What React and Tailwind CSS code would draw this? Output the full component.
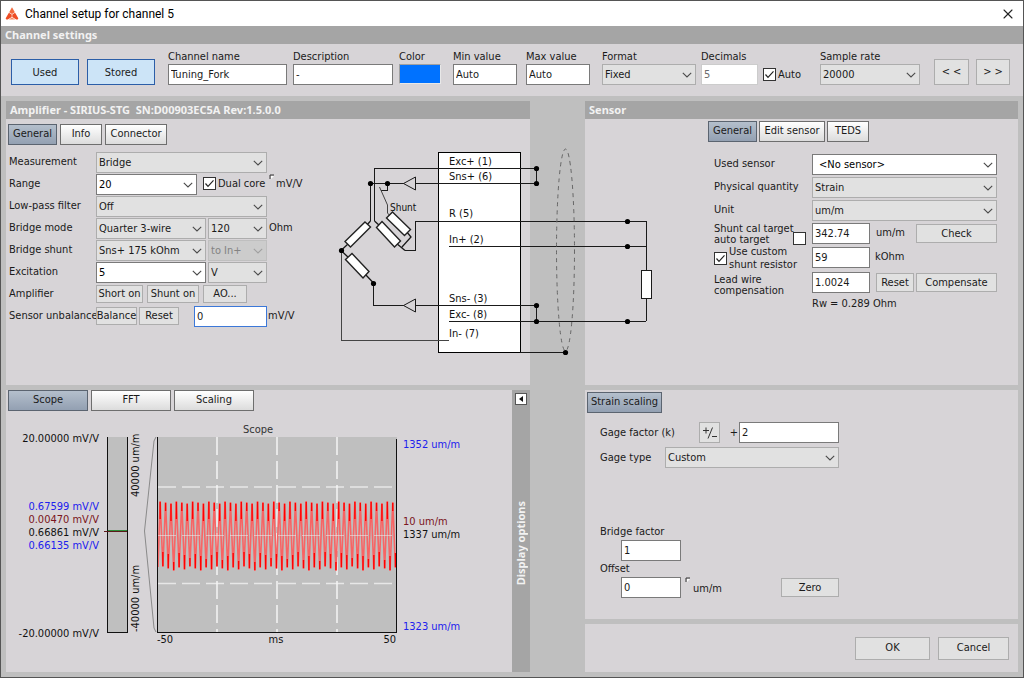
import { useState } from 'react'
import clsx from 'clsx'
import { X } from 'lucide-react'

/**
 * Channel setup dialog.
 *
 *   title bar
 *   channel settings strip
 *   ┌ amplifier + bridge wiring ┐   ┌ sensor ─────────┐
 *   ├ scope ────────────────────┤   ├ strain scaling ─┤
 *   └───────────────────────────┘   └ OK / Cancel ────┘
 */

const CYCLES = 44
const WAVE_LEFT = 158
const WAVE_RIGHT = 396

function Chevron({ faded }) {
  return (
    <svg
      width="10"
      height="6"
      viewBox="0 0 10 6"
      className="pointer-events-none absolute top-2 right-1"
      fill="none"
      stroke={faded ? '#a0a0a0' : '#4a4a4a'}
      strokeWidth="1.1"
    >
      <path d="M0.8 0.8 L5 5 L9.2 0.8" />
    </svg>
  )
}

function Select({ value, options = [], editable, indented, disabled, className, ...rest }) {
  return (
    <span className={clsx('relative block h-[21px] shrink-0', className)}>
      <select
        defaultValue={value}
        disabled={disabled}
        className={clsx(
          'block h-full w-full appearance-none border pr-4 outline-none',
          indented ? 'pl-[6px]' : 'pl-[2px]',
          editable && 'border-[#7a7a7a] bg-white text-black',
          !editable && !disabled && 'border-[#adadad] bg-[#e1e1e1]',
          disabled && 'border-[#bfbfbf] bg-[#cccccc] text-[#838383]',
        )}
        {...rest}
      >
        {[value, ...options].map(o => <option key={o}>{o}</option>)}
      </select>
      <Chevron faded={disabled} />
    </span>
  )
}

function TextBox({ className, focused, ...rest }) {
  return (
    <input
      type="text"
      className={clsx(
        'block h-[21px] min-w-0 shrink-0 border bg-white px-[2px] outline-none',
        focused ? 'border-[#3c78d8]' : 'border-[#7a7a7a]',
        className,
      )}
      {...rest}
    />
  )
}

function Button({ className, children, ...rest }) {
  return (
    <button
      type="button"
      className={clsx(
        'flex shrink-0 items-center justify-center border border-[#adadad] bg-[#e1e1e1] whitespace-nowrap',
        className,
      )}
      {...rest}
    >
      {children}
    </button>
  )
}

function CheckBox({ className, ...rest }) {
  return (
    <span className={clsx('relative block size-[13px] shrink-0', className)}>
      <input
        type="checkbox"
        className="peer block size-full appearance-none border border-[#333] bg-white"
        {...rest}
      />
      <svg
        viewBox="0 0 13 13"
        className="pointer-events-none absolute inset-0 hidden size-full peer-checked:block"
        fill="none"
        stroke="#222"
        strokeWidth="1.2"
      >
        <path d="M2.5 6.5 L5 9.3 L10.5 3.3" />
      </svg>
    </span>
  )
}

function Tab({ active, className, children, ...rest }) {
  return (
    <button
      type="button"
      className={clsx(
        'h-[21px] shrink-0 border bg-linear-to-b pb-[2px] text-center whitespace-nowrap',
        active
          ? 'border-[#5b6470] from-[#b4bfcc] to-[#93a0b2]'
          : 'border-[#6e6e6e] from-white to-[#dcdcdc]',
        className,
      )}
      {...rest}
    >
      {children}
    </button>
  )
}

function PanelHeader({ children }) {
  return (
    <h2 className="h-[18px] bg-[#a5a5a5] px-1 font-['Noto_Sans',sans-serif] leading-[18px] font-bold whitespace-pre text-[#f2f2f2]">
      {children}
    </h2>
  )
}

function UnitMark() {
  return (
    <svg width="6" height="6" viewBox="0 0 6 6" className="shrink-0">
      <path d="M1 5 V1 H5" fill="none" stroke="#333" />
      <path d="M2 2 H5 L2 5 Z" fill="#fff" />
    </svg>
  )
}

function Logo() {
  return (
    <svg width="14" height="13" viewBox="0 0 14 13">
      <path d="M7 0.3 L9.8 5.2 L7 7 L4.2 5.2 Z" fill="#f26a3d" />
      <path d="M3.9 5.7 L6.7 7.5 V10 L2.8 12.4 H1.4 Q0.2 12.2 1 10.8 Z" fill="#ee4d24" />
      <path d="M10.1 5.7 L7.3 7.5 V10 L11.2 12.4 H12.6 Q13.8 12.2 13 10.8 Z" fill="#ee4d24" />
      <path d="M7 10.4 L10.2 12.6 H3.8 Z" fill="#f58a63" />
    </svg>
  )
}

/* ── Top strip ──────────────────────────────────────────────────────────── */

function Field({ id, label, className, children }) {
  return (
    <div className={className}>
      <label htmlFor={id} className="block leading-[15px] whitespace-nowrap">{label}</label>
      {children}
    </div>
  )
}

function ChannelSettings() {
  const toggle = 'flex h-[26px] w-17 shrink-0 items-center justify-center border border-[#2b5ea8] bg-[#cce4f7] pt-[2px]'
  return (
    <section className="flex h-[52px] items-end bg-[#d7d4d7] px-[10px] pb-[11px]">
      <button type="button" className={toggle}>Used</button>
      <button type="button" className={clsx(toggle, 'ml-2')}>Stored</button>

      <Field id="name" label="Channel name" className="ml-[13px] w-[119px]">
        <TextBox id="name" defaultValue="Tuning_Fork" className="w-full" />
      </Field>
      <Field id="desc" label="Description" className="ml-[6px] w-[100px]">
        <TextBox id="desc" defaultValue="-" className="w-full" />
      </Field>
      <Field id="color" label="Color" className="ml-[6px] w-[42px]">
        <button
          id="color"
          type="button"
          aria-label="Color"
          className="mb-[1px] block h-5 w-full border border-[#e8e8e8] border-t-[#a0a0a0] border-l-[#a0a0a0] bg-[#0072ff]"
        />
      </Field>
      <Field id="min" label="Min value" className="ml-3 w-16">
        <TextBox id="min" defaultValue="Auto" className="w-full" />
      </Field>
      <Field id="max" label="Max value" className="ml-[9px] w-16">
        <TextBox id="max" defaultValue="Auto" className="w-full" />
      </Field>
      <Field id="format" label="Format" className="ml-3 w-[94px]">
        <Select id="format" value="Fixed" options={['Scientific']} />
      </Field>
      <Field id="decimals" label="Decimals" className="ml-[5px] w-[57px]">
        <input
          id="decimals"
          defaultValue="5"
          disabled
          className="block h-[21px] w-full border border-[#ccc] bg-white px-[2px] text-[#6d6d6d]"
        />
      </Field>
      <div className="ml-[5px] flex h-[21px] w-[57px] items-center gap-[2px]">
        <CheckBox id="autoDec" defaultChecked />
        <label htmlFor="autoDec">Auto</label>
      </div>
      <Field id="rate" label="Sample rate" className="w-[100px]">
        <Select id="rate" value="20000" options={['10000', '5000']} />
      </Field>
      <Button className="ml-[14px] h-[26px] w-[35px]">&lt; &lt;</Button>
      <Button className="ml-[7px] h-[26px] w-[34px]">&gt; &gt;</Button>
    </section>
  )
}

/* ── Amplifier ──────────────────────────────────────────────────────────── */

function Row({ label, id, children }) {
  return (
    <div className="flex h-[22px] items-start">
      <label htmlFor={id} className="w-[87px] shrink-0 leading-5 whitespace-nowrap">{label}</label>
      {children}
    </div>
  )
}

function Resistor({ points }) {
  return <polygon points={points} fill="#fff" stroke="#222" strokeWidth="1.4" />
}

const NODES = [
  [370, 183], [387, 183], [341, 250], [373, 283],
  [536, 168], [536, 183], [536, 305], [536, 321],
  [627, 221], [627, 246], [627, 321], [565, 352],
]

const PINS = [
  ['Exc+ (1)', 165], ['Sns+ (6)', 180], ['R (5)', 217], ['In+ (2)', 243],
  ['Sns- (3)', 302], ['Exc- (8)', 318], ['In- (7)', 337],
]

// Wiring runs from the bridge through the connector and the cable to the sensor,
// so it spills over the neighbouring panel.
function BridgeDiagram() {
  return (
    <svg
      width="325"
      height="215"
      viewBox="335 145 325 215"
      className="pointer-events-none absolute top-[44px] left-[329px] z-10"
      fill="none"
      stroke="#1a1a1a"
    >
      <rect x="438.5" y="152.5" width="82" height="200" fill="#fff" stroke="#000" />
      <g shapeRendering="crispEdges">
        <path d="M536 168.5 H374.5 V221 M536.5 168 V183" />
        <path d="M536 183.5 H370.5 V221" />
        <path d="M646 221.5 H415.5 V250.5 H405" />
        <path d="M449 246.5 H646" />
        <path d="M536 305.5 H373.5 V283 M536.5 305 V321" />
        <path d="M449 321.5 H646 M646.5 221 V321" />
        <path d="M449 340.5 H341.5 V250" stroke="#444" />
        <path d="M520 352.5 H565" />
        <path d="M387.5 183 V190.5 H381" />
      </g>
      <path d="M415.5 177 V190 L403.5 183.5 Z" fill="#d7d4d7" />
      <path d="M415.5 299 V312 L403.5 305.5 Z" fill="#d7d4d7" />

      <g strokeWidth="1.3">
        <path d="M370.5 221 L366 226 M348 244 L341 250.5 L349 258 M365 274 L373.5 283" />
        <path d="M374.5 221 L380 226 M396 243 L405 250.5 M406 231 L411 237 L402 247" />
      </g>
      <path d="M379.5 187 L387.5 205 V213 L391 217" stroke="#444" />
      <Resistor points="365,222 370.5,227 350.5,247 345,241.5" />
      <Resistor points="352,253.5 369,271.5 363,278 345.5,259.5" />
      <Resistor points="382,221.5 400.5,241 394.5,247 376.5,227.5" />
      <Resistor points="392.5,212 410.5,229.5 404.5,235.5 386.5,218" />
      <rect x="641.5" y="270.5" width="10" height="28" fill="#fff" />
      <ellipse cx="565.5" cy="250" rx="9" ry="101" stroke="#666" strokeDasharray="4 4" />

      {NODES.map(([x, y]) => (
        <circle key={`${x}-${y}`} cx={x + 0.5} cy={y + 0.5} r="2.6" fill="#000" stroke="none" />
      ))}
      <g fill="#111" stroke="none">
        {PINS.map(([name, y]) => <text key={name} x="449" y={y}>{name}</text>)}
        <text x="390" y="211" fontSize="10">Shunt</text>
      </g>
    </svg>
  )
}

function AmplifierPanel() {
  const [tab, setTab] = useState('General')
  const tabs = [['General', 'w-[49px]'], ['Info', 'w-[42px]'], ['Connector', 'w-[62px]']]

  return (
    <section className="relative bg-[#d7d4d7]">
      <PanelHeader>{'Amplifier - SIRIUS-STG  SN:D00903EC5A Rev:1.5.0.0'}</PanelHeader>
      <div className="flex gap-[3px] px-[2px] pt-[5px]">
        {tabs.map(([name, width]) => (
          <Tab key={name} active={tab === name} className={width} onClick={() => setTab(name)}>
            {name}
          </Tab>
        ))}
      </div>

      <div className="px-[3px] pt-[7px]">
        <Row label="Measurement" id="measurement">
          <Select id="measurement" value="Bridge" className="w-[171px]" />
        </Row>
        <Row label="Range" id="range">
          <Select id="range" value="20" options={['10', '2']} editable className="w-[101px]" />
          <CheckBox id="dual" defaultChecked className="mt-[3px] ml-[6px]" />
          <label htmlFor="dual" className="ml-[2px] w-[51px] leading-5 whitespace-nowrap">Dual core</label>
          <UnitMark />
          <span className="ml-[1px] leading-5">mV/V</span>
        </Row>
        <Row label="Low-pass filter" id="lowpass">
          <Select id="lowpass" value="Off" className="w-[171px]" />
        </Row>
        <Row label="Bridge mode" id="mode">
          <Select id="mode" value="Quarter 3-wire" className="w-[110px]" />
          <Select value="120" options={['350']} aria-label="Bridge resistance" className="ml-[2px] w-[59px]" />
          <span className="ml-[2px] leading-5">Ohm</span>
        </Row>
        <Row label="Bridge shunt" id="shunt">
          <Select id="shunt" value="Sns+ 175 kOhm" className="w-[110px]" />
          <Select value="to In+" disabled aria-label="Shunt target" className="ml-[2px] w-[59px]" />
        </Row>
        <Row label="Excitation" id="excitation">
          <Select id="excitation" value="5" options={['10']} editable className="w-[110px]" />
          <Select value="V" options={['mA']} aria-label="Excitation unit" className="ml-[2px] w-[59px]" />
        </Row>
        <Row label="Amplifier">
          <Button className="mt-[1px] h-[18px] w-[47px]">Short on</Button>
          <Button className="mt-[1px] ml-1 h-[18px] w-[52px]">Shunt on</Button>
          <Button className="mt-[1px] ml-1 h-[18px] w-11">AO...</Button>
        </Row>
        <Row label="Sensor unbalance" id="unbalance">
          <Button className="mt-[1px] h-[18px] w-[41px]">Balance</Button>
          <Button className="mt-[1px] ml-[2px] h-[18px] w-10">Reset</Button>
          <TextBox id="unbalance" defaultValue="0" focused className="ml-[15px] w-[73px]" />
          <span className="ml-[1px] leading-5">mV/V</span>
        </Row>
      </div>

      <BridgeDiagram />
    </section>
  )
}

/* ── Sensor ─────────────────────────────────────────────────────────────── */

function SensorPanel() {
  const [tab, setTab] = useState('General')
  const tabs = [['General', 'w-[49px]'], ['Edit sensor', 'w-[66px]'], ['TEDS', 'w-[42px]']]

  return (
    <section className="bg-[#d7d4d7]">
      <PanelHeader>Sensor</PanelHeader>
      <div className="flex gap-[2px] pt-[2px] pl-[123px]">
        {tabs.map(([name, width]) => (
          <Tab key={name} active={tab === name} className={width} onClick={() => setTab(name)}>
            {name}
          </Tab>
        ))}
      </div>

      <div className="grid grid-cols-[98px_1fr] gap-y-[2px] pt-3 pr-[21px] pl-[129px]">
        <label htmlFor="used" className="leading-5">Used sensor</label>
        <Select id="used" value="<No sensor>" editable indented />

        <label htmlFor="quantity" className="leading-5 whitespace-nowrap">Physical quantity</label>
        <Select id="quantity" value="Strain" />

        <label htmlFor="unit" className="leading-5">Unit</label>
        <Select id="unit" value="um/m" />

        <div className="relative h-[22px] leading-[11px]">
          <label htmlFor="target" className="block whitespace-nowrap">Shunt cal target</label>
          <label htmlFor="autoTarget" className="block">auto target</label>
          <CheckBox id="autoTarget" className="absolute! right-[6px] bottom-0" />
        </div>
        <div className="flex items-start">
          <TextBox id="target" defaultValue="342.74" className="w-[58px]" />
          <span className="ml-[6px] flex-1 leading-5">um/m</span>
          <Button className="mt-[1px] h-[19px] w-[81px]">Check</Button>
        </div>

        <div className="flex h-[22px] items-center gap-[2px] leading-[13px]">
          <CheckBox id="custom" defaultChecked />
          <label htmlFor="custom" className="whitespace-nowrap">Use custom<br />shunt resistor</label>
        </div>
        <div className="flex items-start">
          <TextBox aria-label="Shunt resistor" defaultValue="59" className="w-[58px]" />
          <span className="ml-[5px] leading-5">kOhm</span>
        </div>

        <label htmlFor="lead" className="pt-[3px] leading-[11px]">Lead wire<br />compensation</label>
        <div className="flex items-start pt-[1px]">
          <TextBox id="lead" defaultValue="1.0024" className="w-[58px]" />
          <Button className="mt-[1px] ml-auto h-[19px] w-[38px]">Reset</Button>
          <Button className="mt-[1px] ml-[2px] h-[19px] w-[81px]">Compensate</Button>
        </div>
        <p className="col-start-2 leading-3">Rw = 0.289 Ohm</p>
      </div>
    </section>
  )
}

/* ── Scope ──────────────────────────────────────────────────────────────── */

const PERIOD = (WAVE_RIGHT - WAVE_LEFT) / CYCLES

const wave = Array.from({ length: CYCLES }, (_, i) => {
  const x = WAVE_LEFT + i * PERIOD
  return {
    peak: x + PERIOD * 0.4,
    dip: x + PERIOD * 0.9,
    top: 501 + (i % 3),
    bottom: 567 + ((i * 2) % 5),
  }
})

const waveLine = `M${WAVE_LEFT} 567 ` + wave.map(w => `L${w.peak} ${w.top} L${w.dip} ${w.bottom}`).join(' ')
const waveCaps = wave
  .map((w, i) => `M${w.peak} ${w.top + 1} v${i % 3 === 1 ? 8 : 17} M${w.dip} ${w.bottom - 1} v-${i % 3 === 2 ? 8 : 14}`)
  .join(' ')

function ScopeChart() {
  return (
    <svg width="500" height="250" viewBox="6 411 500 250" className="block" fill="#111">
      <text x="258" y="433" textAnchor="middle" fill="#333">Scope</text>

      {/* Range bar */}
      <rect x="107" y="437" width="20" height="195" fill="#bfbfbf" />
      <path d="M107.5 437 V632.5 H127.5 V437" fill="none" stroke="#111" shapeRendering="crispEdges" />
      <path d="M108 530.5 H127" stroke="#2e8b3a" shapeRendering="crispEdges" />
      <path d="M104 531.5 H127" stroke="#5a1a1a" shapeRendering="crispEdges" />
      <path d="M156 437 L154 441 L144.5 531 L154 628 L156 632" fill="none" stroke="#8a8a8a" />
      <g textAnchor="end">
        <text x="99" y="442">20.00000 mV/V</text>
        <text x="99" y="510" fill="#2020ee">0.67599 mV/V</text>
        <text x="99" y="523" fill="#7a1420">0.00470 mV/V</text>
        <text x="99" y="536">0.66861 mV/V</text>
        <text x="99" y="549" fill="#2020ee">0.66135 mV/V</text>
        <text x="99" y="637">-20.00000 mV/V</text>
      </g>
      <text transform="translate(139 497) rotate(-90)">40000 um/m</text>
      <text transform="translate(139 632) rotate(-90)">-40000 um/m</text>

      {/* Plot */}
      <rect x="157" y="437" width="240" height="195" fill="#bfbfbf" />
      <g stroke="#f4f4f4" strokeOpacity="0.75" strokeDasharray="18 6">
        <path d="M158 487 H397 M158 583.5 H397" strokeWidth="1.4" />
        <path d="M217 437 V632 M277 437 V632 M337 437 V632" strokeWidth="2" />
      </g>
      <path d={waveLine} fill="none" stroke="#f86464" strokeWidth="1.6" />
      <path d={waveCaps} stroke="#ff0000" strokeWidth="1.4" />
      <path d="M158 535.5 H397" stroke="#f4f4f4" strokeOpacity="0.5" strokeDasharray="18 6" />
      <path d="M157.5 437 V632.5 H396.5 V439" fill="none" stroke="#111" shapeRendering="crispEdges" />
      <text x="157" y="643">-50</text>
      <text x="276" y="643" textAnchor="middle">ms</text>
      <text x="396" y="643" textAnchor="end">50</text>

      <text x="403" y="448" fill="#2020ee">1352 um/m</text>
      <text x="403" y="525" fill="#7a1420">10 um/m</text>
      <text x="403" y="538">1337 um/m</text>
      <text x="403" y="630" fill="#2020ee">1323 um/m</text>
    </svg>
  )
}

function ScopePanel() {
  const [tab, setTab] = useState('Scope')
  return (
    <section className="flex bg-[#d7d4d7]">
      <div className="min-w-0 flex-1">
        <div className="flex gap-[3px] pl-[2px]">
          {['Scope', 'FFT', 'Scaling'].map(name => (
            <Tab key={name} active={tab === name} className="w-20" onClick={() => setTab(name)}>
              {name}
            </Tab>
          ))}
        </div>
        <ScopeChart />
      </div>
      <aside className="flex w-[18px] flex-col items-center bg-[#a5a5a5] pt-[3px]">
        <button
          type="button"
          aria-label="Show display options"
          className="flex size-3 items-center justify-center border border-[#555] bg-white"
        >
          <svg width="4" height="6" viewBox="0 0 4 6"><path d="M4 0 V6 L0 3 Z" fill="#111" /></svg>
        </button>
        <span className="mt-24 rotate-180 font-['Noto_Sans',sans-serif] leading-[18px] font-bold whitespace-nowrap text-[#f2f2f2] [writing-mode:vertical-rl]">
          Display options
        </span>
      </aside>
    </section>
  )
}

/* ── Strain scaling ─────────────────────────────────────────────────────── */

function StrainPanel() {
  return (
    <section className="flex-1 bg-[#d7d4d7] pt-[2px] pl-[2px]">
      <Tab active className="w-[75px]">Strain scaling</Tab>
      <div className="w-[252px] pt-[9px] pl-[13px]">
        <div className="flex items-center">
          <label htmlFor="gage" className="w-[99px]">Gage factor (k)</label>
          <Button className="h-[21px] w-[21px]" aria-label="Toggle sign">
            <svg width="16" height="14" viewBox="0 0 16 14" fill="none" stroke="#333">
              <path d="M1 4.5 H7 M4 1.5 V7.5 M10.5 1.5 L6 12.5 M10 10.5 H15" />
            </svg>
          </Button>
          <span className="mr-[1px] ml-auto">+</span>
          <TextBox id="gage" defaultValue="2" className="w-[100px]" />
        </div>
        <div className="mt-1 flex items-center">
          <label htmlFor="gageType" className="flex-1">Gage type</label>
          <Select id="gageType" value="Custom" className="w-[174px]" />
        </div>
        <label htmlFor="bridgeFactor" className="mt-[56px] block leading-4">Bridge factor</label>
        <TextBox id="bridgeFactor" defaultValue="1" className="ml-[21px] w-[60px]" />
        <label htmlFor="offset" className="block leading-4">Offset</label>
        <div className="flex items-start pl-[21px]">
          <TextBox id="offset" defaultValue="0" className="w-[60px]" />
          <span className="ml-1 flex items-start gap-[2px]">
            <UnitMark />
            <span className="leading-6">um/m</span>
          </span>
          <Button className="mt-[1px] ml-auto h-[19px] w-[58px]">Zero</Button>
        </div>
      </div>
    </section>
  )
}

export default function App() {
  return (
    <main className="flex min-h-screen flex-col border border-[#555] bg-[#bfbfbf] font-['DejaVu_Sans_Condensed','DejaVu_Sans',sans-serif] text-[11px] leading-4 text-[#1a1a1a]">
      <header className="flex h-[25px] items-center bg-white px-1">
        <Logo />
        <h1 className="ml-[6px] flex-1 font-['Roboto',sans-serif] text-[12px] text-black">
          Channel setup for channel 5
        </h1>
        <button type="button" aria-label="Close" className="mr-[3px]">
          <X size={16} strokeWidth={1.6} color="#222" />
        </button>
      </header>
      <PanelHeader>Channel settings</PanelHeader>
      <ChannelSettings />

      <div className="grid flex-1 grid-cols-[524px_1fr] grid-rows-[284px_1fr] gap-x-[55px] gap-y-[5px] p-[5px]">
        <AmplifierPanel />
        <SensorPanel />
        <ScopePanel />
        <div className="flex flex-col gap-[5px]">
          <StrainPanel />
          <footer className="flex h-12 items-center justify-end gap-2 bg-[#d7d4d7] pr-[9px]">
            <Button className="h-[23px] w-[75px]">OK</Button>
            <Button className="h-[23px] w-[71px]">Cancel</Button>
          </footer>
        </div>
      </div>
    </main>
  )
}
